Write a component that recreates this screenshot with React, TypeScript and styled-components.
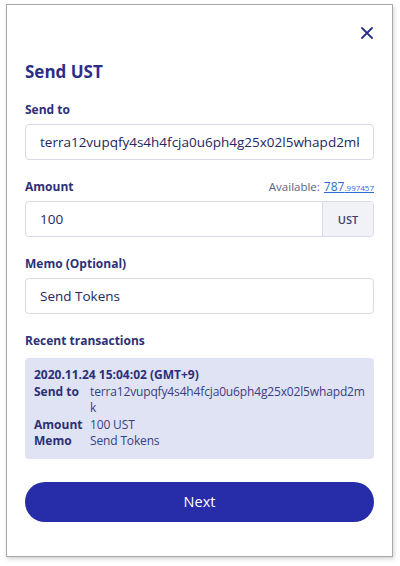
import styled, { createGlobalStyle } from 'styled-components';

const GlobalStyle = createGlobalStyle`
  * {
    margin: 0;
    padding: 0;
    box-sizing: border-box;
  }
  body {
    background: #ffffff;
    font-family: 'Open Sans', 'Liberation Sans', sans-serif;
  }
`;

const Page = styled.div`
  width: 400px;
  height: 566px;
  padding: 4px 7px 9px 6px;
`;

const Card = styled.div`
  width: 100%;
  height: 100%;
  background: #ffffff;
  border: 1px solid #a9a9a9;
  box-shadow: 1px 2px 4px rgba(0, 0, 0, 0.18);
  padding: 20px 18px 0 18px;
  display: flex;
  flex-direction: column;
`;

const Top = styled.div`
  display: flex;
  justify-content: flex-end;
  height: 16px;
`;

const Close = styled.button`
  border: none;
  background: none;
  width: 16px;
  height: 16px;
  display: flex;
  align-items: center;
  justify-content: center;
  margin-right: -1px;
  cursor: pointer;
`;

const Title = styled.h1`
  margin-top: 19px;
  font-size: 17px;
  font-weight: 700;
  color: #2a2f86;
  line-height: 24px;
`;

const Field = styled.div<{ $gap?: number }>`
  margin-top: ${(p) => p.$gap ?? 19}px;
  display: flex;
  flex-direction: column;
`;

const LabelRow = styled.div`
  display: flex;
  justify-content: space-between;
  align-items: center;
  height: 16px;
  margin-bottom: 6px;
`;

const Label = styled.label`
  font-size: 12px;
  font-weight: 700;
  color: #2c3077;
  line-height: 16px;
`;

const Available = styled.span`
  font-size: 11.5px;
  color: #5c6388;
  line-height: 16px;
  a {
    color: #2f6bd4;
    text-decoration: underline;
    margin-left: 4px;
    font-size: 12px;
  }
  small {
    font-size: 8px;
  }
`;

const InputBox = styled.div`
  display: flex;
  height: 36px;
  border: 1px solid #d7dae5;
  border-radius: 4px;
  overflow: hidden;
  background: #fff;
`;

const Input = styled.input`
  flex: 1;
  min-width: 0;
  border: none;
  outline: none;
  padding: 0 14px;
  font-family: inherit;
  font-size: 13.5px;
  color: #232762;
  background: transparent;
`;

const Unit = styled.div`
  width: 51px;
  border-left: 1px solid #d7dae5;
  background: #f1f2f7;
  display: flex;
  align-items: center;
  justify-content: center;
  font-size: 11px;
  font-weight: 600;
  color: #3a3f70;
`;

const Recent = styled.div`
  margin-top: 3px;
  background: #dfe3f3;
  border-radius: 4px;
  padding: 9px 8px 9px 9px;
  font-size: 12px;
  line-height: 16.5px;
  color: #2c3077;
`;

const Stamp = styled.div`
  font-weight: 700;
`;

const Row = styled.div`
  display: grid;
  grid-template-columns: 56px 1fr;
`;

const Key = styled.span`
  font-weight: 700;
`;

const Val = styled.span`
  word-break: break-all;
  letter-spacing: -0.15px;
  color: #3a3f82;
`;

const NextButton = styled.button`
  margin-top: 23px;
  height: 40px;
  border: none;
  border-radius: 20px;
  background: #272ca8;
  color: #ffffff;
  font-family: inherit;
  font-size: 14.5px;
  font-weight: 500;
  cursor: pointer;
`;

const address = 'terra12vupqfy4s4h4fcja0u6ph4g25x02l5whapd2mk';

const App: React.FC = () => {
  return (
    <>
      <GlobalStyle />
      <Page>
        <Card>
          <Top>
            <Close aria-label="close">
              <svg width="12" height="12" viewBox="0 0 12 12">
                <path d="M1 1 L11 11 M11 1 L1 11" stroke="#2a2f86" strokeWidth="1.8" strokeLinecap="round" />
              </svg>
            </Close>
          </Top>
          <Title>Send UST</Title>

          <Field $gap={18}>
            <LabelRow>
              <Label>Send to</Label>
            </LabelRow>
            <InputBox>
              <Input defaultValue={address} />
            </InputBox>
          </Field>

          <Field>
            <LabelRow>
              <Label>Amount</Label>
              <Available>
                Available:<a>787<small>.997457</small></a>
              </Available>
            </LabelRow>
            <InputBox>
              <Input defaultValue="100" />
              <Unit>UST</Unit>
            </InputBox>
          </Field>

          <Field>
            <LabelRow>
              <Label>Memo (Optional)</Label>
            </LabelRow>
            <InputBox>
              <Input defaultValue="Send Tokens" />
            </InputBox>
          </Field>

          <Field>
            <LabelRow>
              <Label>Recent transactions</Label>
            </LabelRow>
            <Recent>
              <Stamp>2020.11.24 15:04:02 (GMT+9)</Stamp>
              <Row>
                <Key>Send to</Key>
                <Val>{address}</Val>
              </Row>
              <Row>
                <Key>Amount</Key>
                <Val>100 UST</Val>
              </Row>
              <Row>
                <Key>Memo</Key>
                <Val>Send Tokens</Val>
              </Row>
            </Recent>
          </Field>

          <NextButton>Next</NextButton>
        </Card>
      </Page>
    </>
  );
};

export default App;
